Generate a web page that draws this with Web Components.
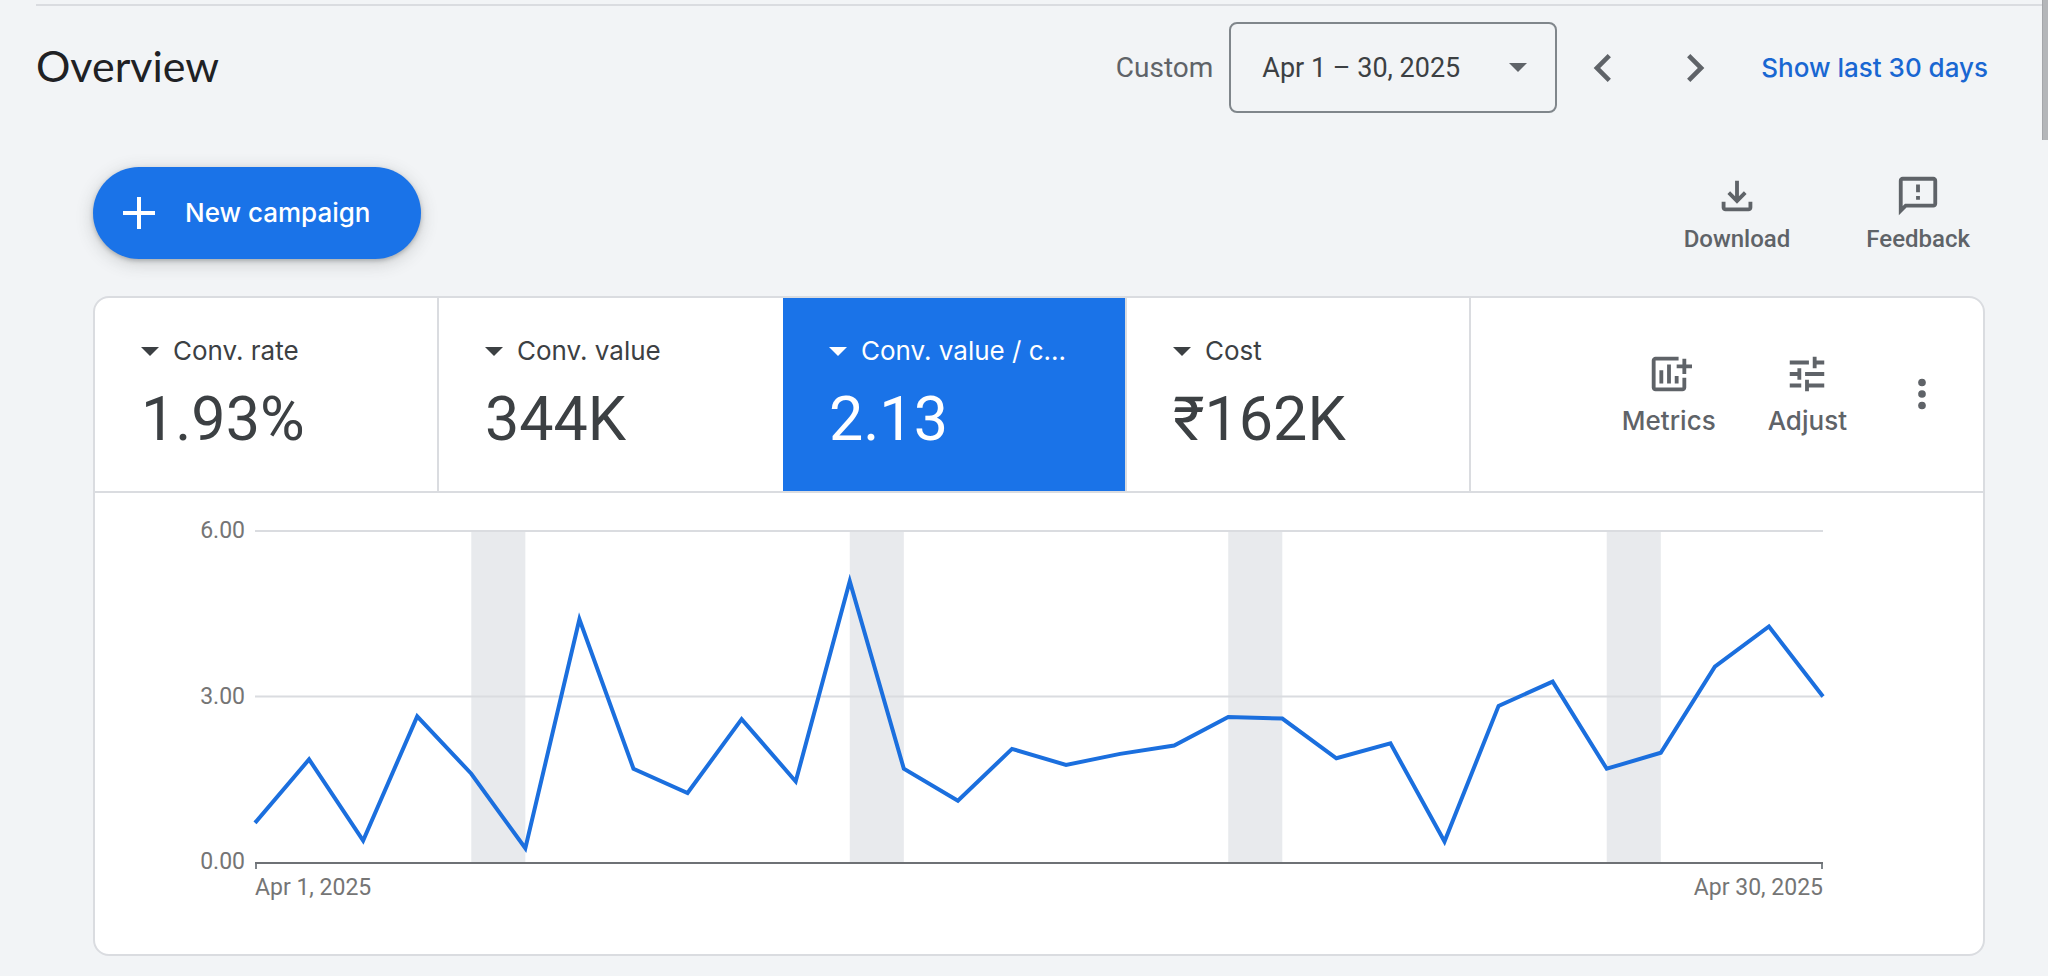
<!DOCTYPE html>
<html lang="en">
<head>
<meta charset="utf-8">
<meta name="viewport" content="width=device-width, initial-scale=1">
<title>Overview</title>
<style>
  html {
    --page: #f2f4f6;
    --ink: #202124;
    --ink-2: #3c4043;
    --muted: #5f6368;
    --rule: #dadce0;
    --blue: #1a73e8;
    --series: #1b6fde;
    --link: #1967d2;
    --band: #e8eaed;
    --label-font: Inter, "Open Sans", sans-serif;
    --body-font: Roboto, "Liberation Sans", sans-serif;
    --title-font: Lato, "Open Sans", sans-serif;
    background: var(--page);
  }
  body { margin: 0; font-family: var(--body-font); color: var(--ink); }
</style>
</head>
<body>
<ads-page>
  <overview-header slot="header" heading="Overview" mode="Custom" range="Apr 1 – 30, 2025" shortcut="Show last 30 days"></overview-header>

  <action-bar slot="actions">
    <new-button slot="primary">New campaign</new-button>
    <icon-button size="small" icon="download">Download</icon-button>
    <icon-button size="small" icon="feedback">Feedback</icon-button>
  </action-bar>

  <score-card>
    <metric-tile slot="metrics" label="Conv. rate">1.93%</metric-tile>
    <metric-tile slot="metrics" label="Conv. value" before-selected>344K</metric-tile>
    <metric-tile slot="metrics" label="Conv. value / c..." selected>2.13</metric-tile>
    <metric-tile slot="metrics" label="Cost">₹162K</metric-tile>
    <icon-button slot="tools" icon="metrics">Metrics</icon-button>
    <icon-button slot="tools" icon="tune">Adjust</icon-button>
    <icon-button slot="tools" icon="more" name="More options"></icon-button>
    <line-chart max="6" from="Apr 1, 2025" to="Apr 30, 2025" bands="4 11 18 25"
      values="0.71 1.86 0.39 2.64 1.60 0.25 4.40 1.69 1.25 2.59 1.46 5.09 1.69 1.11 2.05 1.76 1.96 2.11 2.63 2.60 1.88 2.15 0.37 2.83 3.27 1.69 1.98 3.54 4.27 3.00"></line-chart>
  </score-card>
</ads-page>

<script>
const ICONS = {
  download: '<path d="M12 16l-5-5 1.4-1.45 2.6 2.6V4h2v8.15l2.6-2.6L17 11zM6 20q-.825 0-1.412-.587Q4 18.825 4 18v-3h2v3h12v-3h2v3q0 .825-.587 1.413Q18.825 20 18 20z"/>',
  feedback: '<path d="M20 2H4c-1.1 0-2 .9-2 2v18l4-4h14c1.1 0 2-.9 2-2V4c0-1.1-.9-2-2-2zm0 14H5.2L4 17.2V4h16zM11 12h2v2h-2zM11 6h2v4h-2z"/>',
  metrics: '<path d="M17 3H5c-1.1 0-2 .9-2 2v14c0 1.1.9 2 2 2h14c1.1 0 2-.9 2-2v-5h-2v5H5V5h12zM7 10h2v7H7zM11 7h2v10h-2zM15 13h2v4h-2zM19 4h2v3h3v2h-3v3h-2V9h-3V7h3z"/>',
  tune: '<path d="M3 17v2h6v-2H3zM3 5v2h10V5H3zm10 16v-2h8v-2h-8v-2h-2v6h2zM7 9v2H3v2h4v2h2V9H7zm14 4v-2H11v2h10zm-6-4h2V7h4V5h-4V3h-2v6z"/>',
  more: '<circle cx="12" cy="6" r="2"/><circle cx="12" cy="12" r="2"/><circle cx="12" cy="18" r="2"/>'
};

const RESET = `
  *, *::before, *::after { box-sizing: border-box; }
  button { margin: 0; padding: 0; border: 0; background: none; color: inherit; font: inherit; cursor: pointer; }
  svg { display: block; fill: currentColor; flex: none; }
`;

class BaseElement extends HTMLElement {
  connectedCallback() {
    if (this.shadowRoot) return;
    this.attachShadow({ mode: 'open' }).innerHTML = `<style>${RESET}${this.css()}</style>${this.html()}`;
  }
  attr(name) { return this.getAttribute(name) || ''; }
}

customElements.define('ads-page', class extends BaseElement {
  css() { return `
    :host { display: block; position: relative; padding-top: 4px; }
    .rule { height: 2px; margin: 0 6px 0 36px; background: var(--rule); }
    .thumb { position: absolute; top: 0; right: 0; width: 6px; height: 140px; background: #b4b6b9; border-left: 1px solid #a4a6aa; }
    main { padding: 0 63px 21px 93px; }
  `; }
  html() { return `
    <div class="rule"></div>
    <slot name="header"></slot>
    <main><slot name="actions"></slot><slot></slot></main>
    <div class="thumb"></div>
  `; }
});

customElements.define('overview-header', class extends BaseElement {
  css() { return `
    :host { display: flex; align-items: center; padding: 16px 60px 0 36px; }
    h1 { flex: 1; margin: 0; padding-bottom: 4px; font: 400 43px/52px var(--title-font); color: var(--ink); }
    label { margin-right: 16px; font-size: 28px; line-height: 32px; color: var(--muted); }
    .picker { display: grid; align-items: center; }
    .picker > * { grid-area: 1 / 1; }
    select {
      appearance: none; width: 328px; height: 91px; padding: 0 60px 0 31px; margin: 0;
      border: 2px solid #80868b; border-radius: 8px; background: none;
      font: 400 27px/32px var(--body-font); color: var(--ink-2);
    }
    .picker svg { justify-self: end; margin-right: 30px; color: var(--muted); pointer-events: none; }
    button { display: grid; place-items: center; width: 92px; height: 91px; color: var(--muted); }
    a { margin-left: 20px; font: 500 26px/32px var(--label-font); color: var(--link); text-decoration: none; white-space: nowrap; }
  `; }
  html() { return `
    <h1>${this.attr('heading')}</h1>
    <label for="range">${this.attr('mode')}</label>
    <div class="picker">
      <select id="range"><option>${this.attr('range')}</option></select>
      <svg width="18" height="9" viewBox="0 0 18 9"><path d="M0 0h18L9 9z"/></svg>
    </div>
    <button aria-label="Previous period"><svg width="56" height="56" viewBox="0 0 24 24"><path d="M15.4 7.4L14 6l-6 6 6 6 1.4-1.4-4.6-4.6z"/></svg></button>
    <button aria-label="Next period"><svg width="56" height="56" viewBox="0 0 24 24"><path d="M8.6 7.4L10 6l6 6-6 6-1.4-1.4 4.6-4.6z"/></svg></button>
    <a href="#">${this.attr('shortcut')}</a>
  `; }
});

customElements.define('action-bar', class extends BaseElement {
  css() { return `
    :host { display: flex; align-items: center; gap: 76px; padding: 54px 15px 37px 0; }
    .primary { flex: 1; }
  `; }
  html() { return `<div class="primary"><slot name="primary"></slot></div><slot></slot>`; }
});

customElements.define('new-button', class extends BaseElement {
  css() { return `
    :host { display: inline-block; vertical-align: top; }
    button {
      display: flex; align-items: center; gap: 30px; height: 92px; padding: 0 50px 0 30px; border-radius: 46px;
      background: var(--blue); color: #fff; font: 500 26px/32px var(--label-font);
      box-shadow: 0 2px 4px rgba(60, 64, 67, .3), 0 4px 16px 2px rgba(60, 64, 67, .18);
    }
  `; }
  html() { return `<button><svg width="32" height="32" viewBox="0 0 32 32"><path d="M14 0h4v14h14v4H18v14h-4V18H0v-4h14z"/></svg><slot></slot></button>`; }
});

customElements.define('icon-button', class extends BaseElement {
  css() { return `
    :host { display: block; }
    button { display: flex; flex-direction: column; align-items: center; gap: 8px; color: var(--muted); font: 500 26px/32px var(--label-font); }
    :host([size="small"]) button { gap: 6px; font: 500 24px/28px var(--body-font); }
  `; }
  html() {
    const name = this.attr('name');
    return `<button${name ? ` aria-label="${name}"` : ''}><svg width="46" height="46" viewBox="0 0 24 24">${ICONS[this.attr('icon')]}</svg>${name ? '' : '<span><slot></slot></span>'}</button>`;
  }
});

customElements.define('metric-tile', class extends BaseElement {
  css() { return `
    :host { display: block; padding: 35px 0 36px 46px; border-right: 2px solid var(--rule); background-clip: padding-box; color: var(--ink-2); }
    :host([before-selected]) { border-right-color: transparent; }
    :host([selected]) { background-color: var(--blue); color: #fff; }
    button { display: flex; align-items: center; gap: 14px; font: 400 26px/36px var(--label-font); white-space: nowrap; }
    .value { margin-top: 14px; font-size: 61px; line-height: 72px; }
  `; }
  html() { return `
    <button><svg width="18" height="9" viewBox="0 0 18 9"><path d="M0 0h18L9 9z"/></svg><span>${this.attr('label')}</span></button>
    <div class="value"><slot></slot></div>
  `; }
});

customElements.define('score-card', class extends BaseElement {
  css() { return `
    :host { display: block; border: 2px solid var(--rule); border-radius: 16px; background: #fff; overflow: hidden; }
    .row { display: grid; grid-template-columns: repeat(4, minmax(0, 344fr)) minmax(0, 512fr); border-bottom: 2px solid var(--rule); }
    .tools { display: flex; align-items: center; justify-content: flex-end; gap: 52px; padding: 0 38px 2px 0; }
  `; }
  html() { return `
    <div class="row"><slot name="metrics"></slot><div class="tools"><slot name="tools"></slot></div></div>
    <slot></slot>
  `; }
});

customElements.define('line-chart', class extends BaseElement {
  css() { return `
    :host { display: grid; grid-template-columns: 150px minmax(0, 1fr); column-gap: 10px; padding: 38px 160px 52px 0; font-size: 23px; line-height: 28px; color: #757575; }
    .y { display: flex; flex-direction: column; justify-content: space-between; align-items: flex-end; margin: -14px 0; }
    .plot { width: 100%; height: 331px; }
    .plot * { vector-effect: non-scaling-stroke; }
    .band { fill: var(--band); }
    .grid { stroke: var(--rule); stroke-width: 2px; }
    .line { fill: none; stroke: var(--series); stroke-width: 4px; }
    .x { grid-column: 2; border-top: 2px solid #6e7175; }
    .ticks { height: 5px; border: solid #80868b; border-width: 0 2px; }
    .dates { display: flex; justify-content: space-between; margin-top: 5px; }
  `; }
  html() {
    const max = Number(this.attr('max'));
    const values = this.attr('values').split(' ').map(Number);
    const last = values.length - 1;
    const bands = this.attr('bands').split(' ').map(x => `<rect class="band" x="${x}" y="0" width="1" height="${max}"/>`).join('');
    const points = values.map((v, i) => `${i},${(max - v).toFixed(2)}`).join(' ');
    return `
      <div class="y">${[max, max / 2, 0].map(v => `<span>${v.toFixed(2)}</span>`).join('')}</div>
      <svg class="plot" viewBox="0 0 ${last} ${max}" preserveAspectRatio="none" overflow="visible" role="img" aria-label="Daily values">
        ${bands}
        <line class="grid" x1="0" x2="${last}" y1="0" y2="0"/>
        <line class="grid" x1="0" x2="${last}" y1="${max / 2}" y2="${max / 2}"/>
        <polyline class="line" points="${points}"/>
      </svg>
      <div class="x"><div class="ticks"></div><div class="dates"><span>${this.attr('from')}</span><span>${this.attr('to')}</span></div></div>
    `;
  }
});
</script>
</body>
</html>
